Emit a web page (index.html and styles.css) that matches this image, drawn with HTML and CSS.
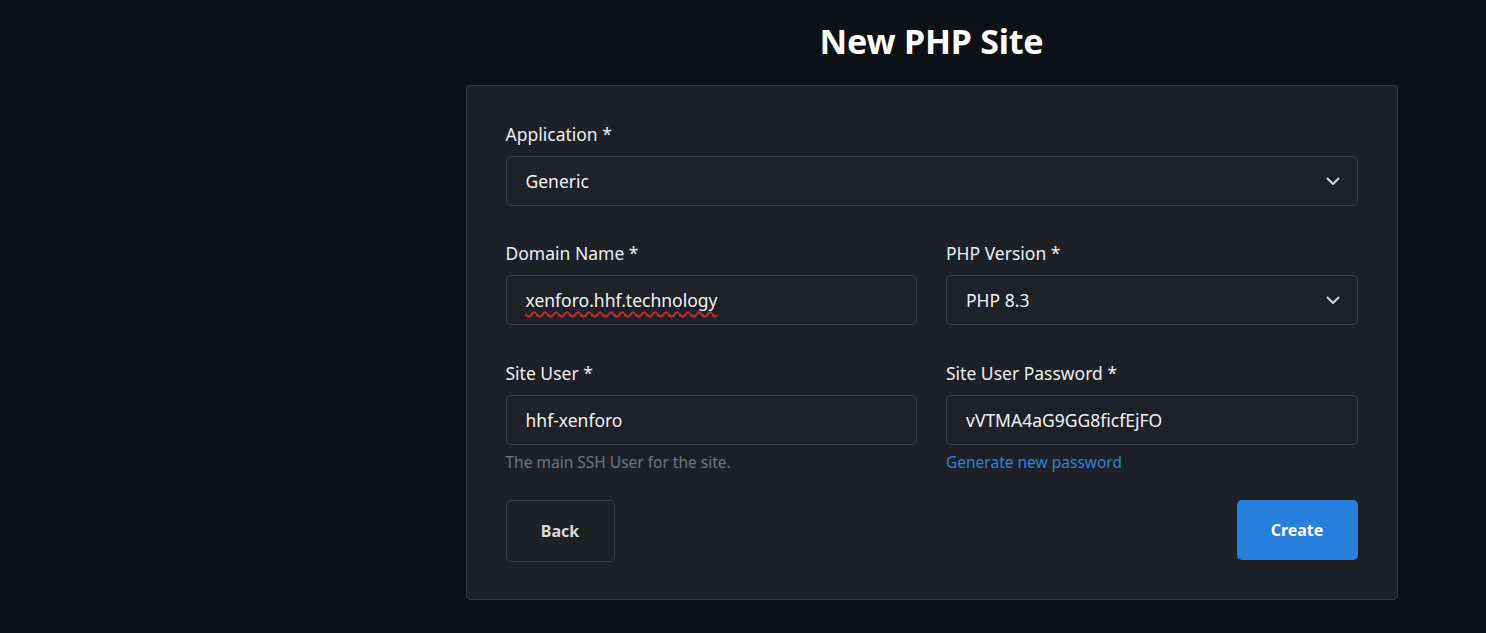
FILE: index.html
```html
<!DOCTYPE html>
<html lang="en">
<head>
<meta charset="utf-8">
<title>New PHP Site</title>
<link rel="stylesheet" href="styles.css">
</head>
<body>
<div class="layout">
  <aside class="sidebar"></aside>
  <main class="main">
    <h1 class="title">New PHP Site</h1>
    <section class="card">
      <div class="field">
        <label class="label">Application *</label>
        <div class="control select">
          <span>Generic</span>
          <svg class="chev" width="14" height="9" viewBox="0 0 14 9"><path d="M1.5 1.5 L7 7 L12.5 1.5" fill="none" stroke="#d4d6da" stroke-width="2" stroke-linecap="round" stroke-linejoin="round"/></svg>
        </div>
      </div>
      <div class="row">
        <div class="field">
          <label class="label">Domain Name *</label>
          <div class="control"><span class="misspelled">xenforo.hhf.technology</span></div>
        </div>
        <div class="field">
          <label class="label">PHP Version *</label>
          <div class="control select">
            <span>PHP 8.3</span>
            <svg class="chev" width="14" height="9" viewBox="0 0 14 9"><path d="M1.5 1.5 L7 7 L12.5 1.5" fill="none" stroke="#d4d6da" stroke-width="2" stroke-linecap="round" stroke-linejoin="round"/></svg>
          </div>
        </div>
      </div>
      <div class="row row-last">
        <div class="field">
          <label class="label">Site User *</label>
          <div class="control"><span>hhf-xenforo</span></div>
          <p class="help">The main SSH User for the site.</p>
        </div>
        <div class="field">
          <label class="label">Site User Password *</label>
          <div class="control"><span>vVTMA4aG9GG8ficfEjFO</span></div>
          <a class="link" href="#">Generate new password</a>
        </div>
      </div>
      <div class="actions">
        <button class="btn btn-back">Back</button>
        <button class="btn btn-create">Create</button>
      </div>
    </section>
  </main>
</div>
</body>
</html>
```

FILE: styles.css
```css
* { box-sizing: border-box; }
html, body {
  margin: 0;
  padding: 0;
  background: #0e1116;
  font-family: "Noto Sans", "Open Sans", "Liberation Sans", sans-serif;
  color: #e6e7ea;
}
.layout {
  display: grid;
  grid-template-columns: 377px 1fr;
  min-height: 633px;
}
.main {
  display: flex;
  flex-direction: column;
  align-items: center;
}
.title {
  margin: 19px 0 0;
  font-size: 34px;
  line-height: 44px;
  font-weight: 700;
  color: #ffffff;
  letter-spacing: -0.2px;
}
.card {
  width: 932px;
  margin-top: 22px;
  background: #1e2028;
  border: 1px solid #383b43;
  border-radius: 4px;
  padding: 36px 39px 37px;
  display: flex;
  flex-direction: column;
}
.row {
  display: grid;
  grid-template-columns: 1fr 1fr;
  column-gap: 29px;
  margin-top: 35px;
}
.row-last { margin-top: 36px; }
.field {
  display: flex;
  flex-direction: column;
}
.label {
  font-size: 17.5px;
  line-height: 24px;
  color: #eceef1;
  margin-bottom: 10px;
}
.control {
  height: 50px;
  border: 1px solid #3a3d46;
  border-radius: 5px;
  background: #1f2129;
  display: flex;
  align-items: center;
  justify-content: space-between;
  padding: 0 17px 0 19px;
  font-size: 17.5px;
  color: #f1f2f4;
}
.misspelled {
  text-decoration: underline wavy #c42b2b;
  text-decoration-thickness: 1.5px;
  text-underline-offset: 4px;
}
.chev { display: block; }
.help {
  margin: 6px 0 0;
  font-size: 15.5px;
  line-height: 22px;
  color: #6e727b;
}
.link {
  margin-top: 6px;
  font-size: 15.5px;
  line-height: 22px;
  color: #2f7fd6;
  text-decoration: none;
}
.actions {
  display: flex;
  justify-content: space-between;
  align-items: flex-start;
  margin-top: 27px;
}
.btn {
  font-family: inherit;
  font-size: 16px;
  font-weight: 700;
  border-radius: 5px;
  cursor: pointer;
}
.btn-back {
  width: 109px;
  height: 62px;
  background: #1e2028;
  border: 1px solid #3a3d46;
  color: #d6d9de;
}
.btn-create {
  width: 121px;
  height: 60px;
  background: #2780de;
  border: none;
  color: #ffffff;
}
```
